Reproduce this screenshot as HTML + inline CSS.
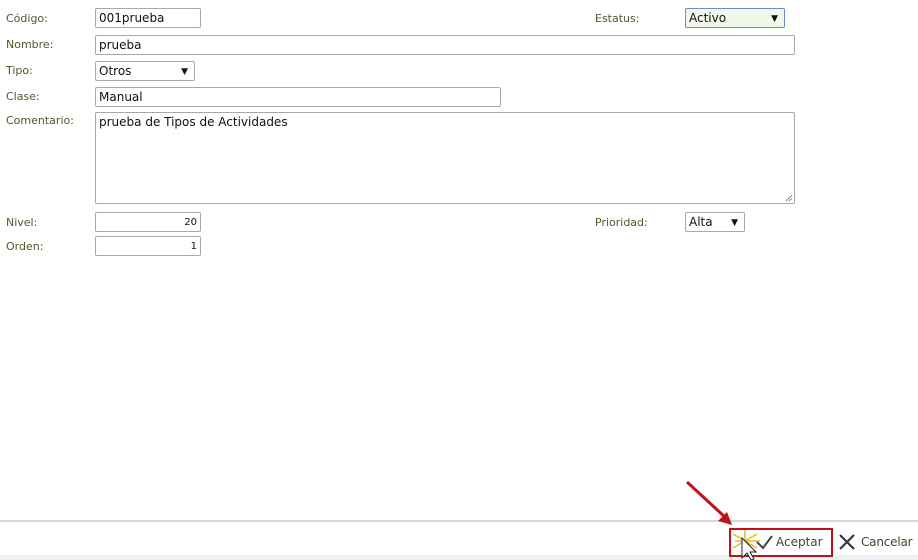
<!DOCTYPE html>
<html><head><meta charset="utf-8"><style>
body{margin:0;width:918px;height:560px;background:#fff;position:relative;overflow:hidden;font-family:"DejaVu Sans","Liberation Sans",sans-serif;}
.l{position:absolute;font-size:11px;color:#4e5a2c;}
.f{position:absolute;box-sizing:border-box;border:1px solid #a9a9a9;border-radius:2px;background:#fff;font-size:12px;color:#111;padding:2px 3px;height:20px;line-height:14px;}
.sel:after{content:"▼";position:absolute;right:6px;top:3px;font-size:9px;}
.num{text-align:right;font-size:10px;padding-top:3px;}
</style></head><body>
<div class="l" style="left:6px;top:12px">Código:</div>
<div class="f" style="left:95px;top:8px;width:106px">001prueba</div>
<div class="l" style="left:595px;top:12px">Estatus:</div>
<div class="f sel" style="left:685px;top:8px;width:100px;background:#f1f8e9;border-color:#6a8fc8">Activo</div>
<div class="l" style="left:6px;top:38px">Nombre:</div>
<div class="f" style="left:95px;top:35px;width:700px">prueba</div>
<div class="l" style="left:6px;top:64px">Tipo:</div>
<div class="f sel" style="left:95px;top:61px;width:100px">Otros</div>
<div class="l" style="left:6px;top:90px">Clase:</div>
<div class="f" style="left:95px;top:87px;width:406px">Manual</div>
<div class="l" style="left:6px;top:114px">Comentario:</div>
<div class="f" style="left:95px;top:112px;width:700px;height:92px">prueba de Tipos de Actividades</div>
<div class="l" style="left:6px;top:216px">Nivel:</div>
<div class="f num" style="left:95px;top:212px;width:106px">20</div>
<div class="l" style="left:595px;top:216px">Prioridad:</div>
<div class="f sel" style="left:685px;top:212px;width:60px">Alta</div>
<div class="l" style="left:6px;top:240px">Orden:</div>
<div class="f num" style="left:95px;top:236px;width:106px">1</div>
<div style="position:absolute;left:0;top:520px;width:918px;height:2px;background:#d8d8d8"></div>
<div style="position:absolute;left:0;top:555px;width:918px;height:5px;background:#eef1f4"></div>
<div style="position:absolute;left:729px;top:528px;width:104px;height:29px;box-sizing:border-box;border:2px solid #c0111a"></div>
<svg style="position:absolute;left:0;top:0" width="918" height="560">
<g stroke="#888" stroke-width="1"><line x1="786" y1="201" x2="792" y2="195"/><line x1="789" y1="201" x2="792" y2="198"/></g>
<line x1="687" y1="482" x2="726" y2="518" stroke="#c0111a" stroke-width="3"/>
<polygon points="732,525 718,521 727,512" fill="#c0111a"/>
<g stroke="#e8b820" stroke-width="1.5"><line x1="733" y1="534" x2="757" y2="548"/><line x1="733" y1="548" x2="757" y2="534"/><line x1="745" y1="530" x2="745" y2="552"/><line x1="735" y1="541" x2="760" y2="541"/></g>
<polyline points="757,542 763,548 772,536" fill="none" stroke="#444" stroke-width="2"/>
<path d="M742 538 L742 558 L747 553 L751 560 L754 559 L750 552 L756 552 Z" fill="#fff" stroke="#222"/>
<g stroke="#333" stroke-width="2"><line x1="840" y1="535" x2="854" y2="549"/><line x1="854" y1="535" x2="840" y2="549"/></g>
</svg>
<div class="l" style="left:776px;top:535px;font-size:12px;color:#3d4a2a">Aceptar</div>
<div class="l" style="left:861px;top:535px;font-size:12px;color:#3d4a2a;letter-spacing:-0.2px">Cancelar</div>
</body></html>
